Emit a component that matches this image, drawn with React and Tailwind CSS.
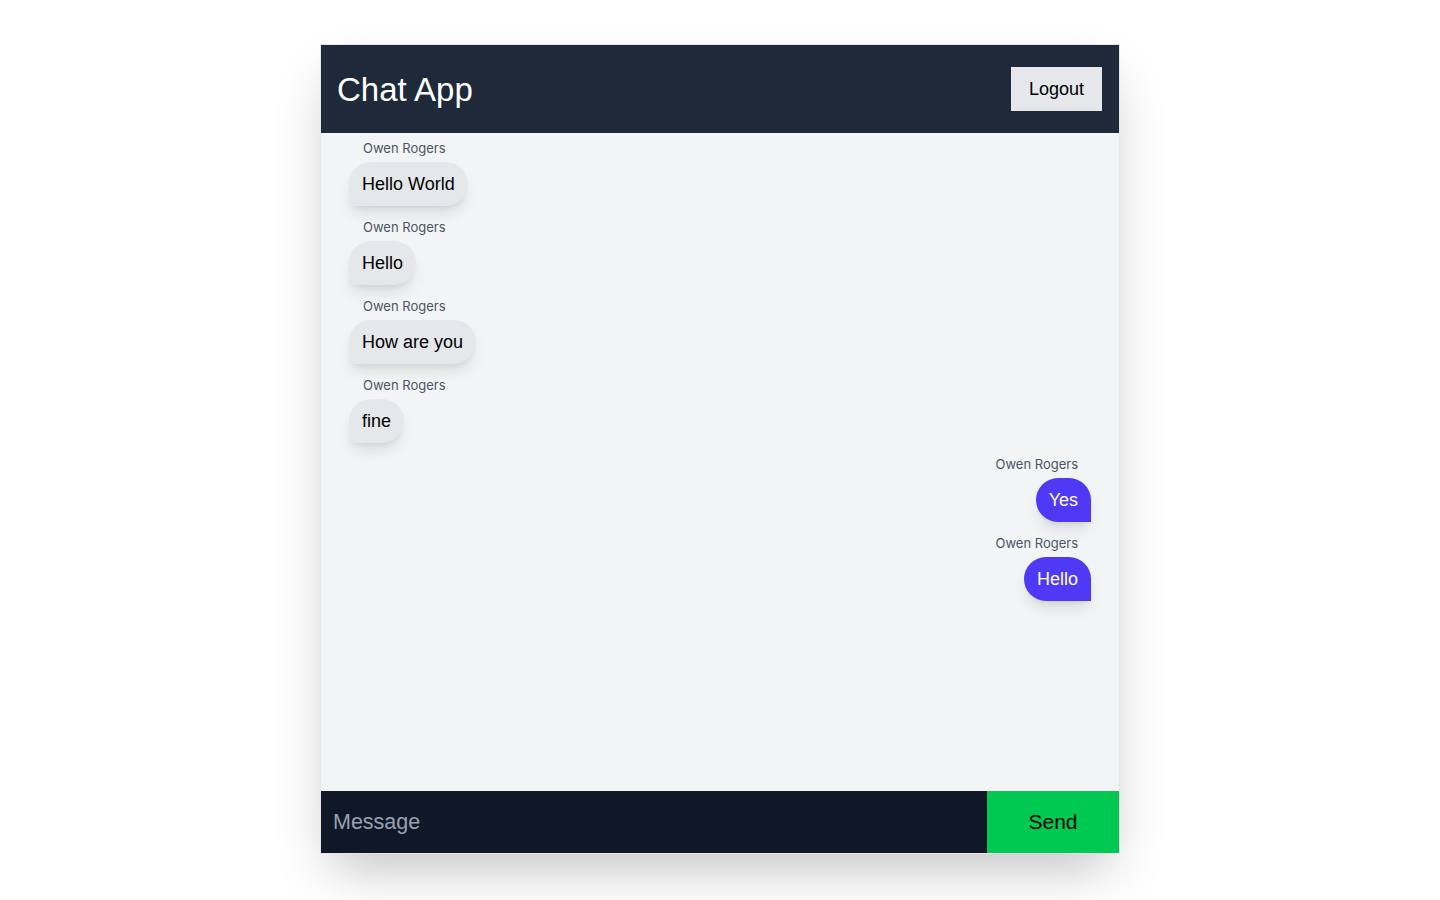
import React from "react";

const messages = [
  { text: "Hello World", mine: false },
  { text: "Hello", mine: false },
  { text: "How are you", mine: false },
  { text: "fine", mine: false },
  { text: "Yes", mine: true },
  { text: "Hello", mine: true },
];

export default function App() {
  return (
    <div className="min-h-screen bg-white flex justify-center pt-[44px]" style={{ fontFamily: '"Liberation Sans", Arial, sans-serif' }}>
      <div className="w-[800px] h-[810px] flex flex-col border border-gray-200 shadow-2xl">
        <header className="h-[88px] shrink-0 bg-gray-800 flex items-center justify-between pl-4 pr-[17px]">
          <h1 className="text-[33px] leading-none text-white">Chat App</h1>
          <button className="bg-gray-200 text-black text-[18px] leading-7 py-2 px-[18px]">Logout</button>
        </header>
        <main className="flex-1 bg-gray-100 px-7 pt-[7px] flex flex-col gap-[13px]">
          {messages.map((m, i) => (
            <div key={i} className={m.mine ? "flex flex-col items-end" : "flex flex-col items-start"}>
              <div
                className={
                  "text-[13px] leading-4 text-gray-600 mb-[6px] " + (m.mine ? "pr-[13px]" : "pl-[14px]")
                }
                style={{ fontFamily: 'Inter, "Noto Sans", sans-serif' }}
              >
                Owen Rogers
              </div>
              <div
                className={
                  m.mine
                    ? "bg-indigo-600 text-white text-[18px] leading-7 px-[13px] py-2 rounded-3xl rounded-br-none shadow-lg"
                    : "bg-gray-200 text-black text-[18px] leading-7 px-[13px] py-2 rounded-3xl rounded-bl-none shadow-lg"
                }
              >
                {m.text}
              </div>
            </div>
          ))}
        </main>
        <footer className="h-[62px] shrink-0 flex">
          <input
            className="flex-1 min-w-0 bg-gray-900 px-3 text-[21.5px] text-white placeholder:text-gray-400 outline-none"
            placeholder="Message"
          />
          <button className="w-[132px] bg-green-500 text-black text-[21px]">Send</button>
        </footer>
      </div>
    </div>
  );
}
